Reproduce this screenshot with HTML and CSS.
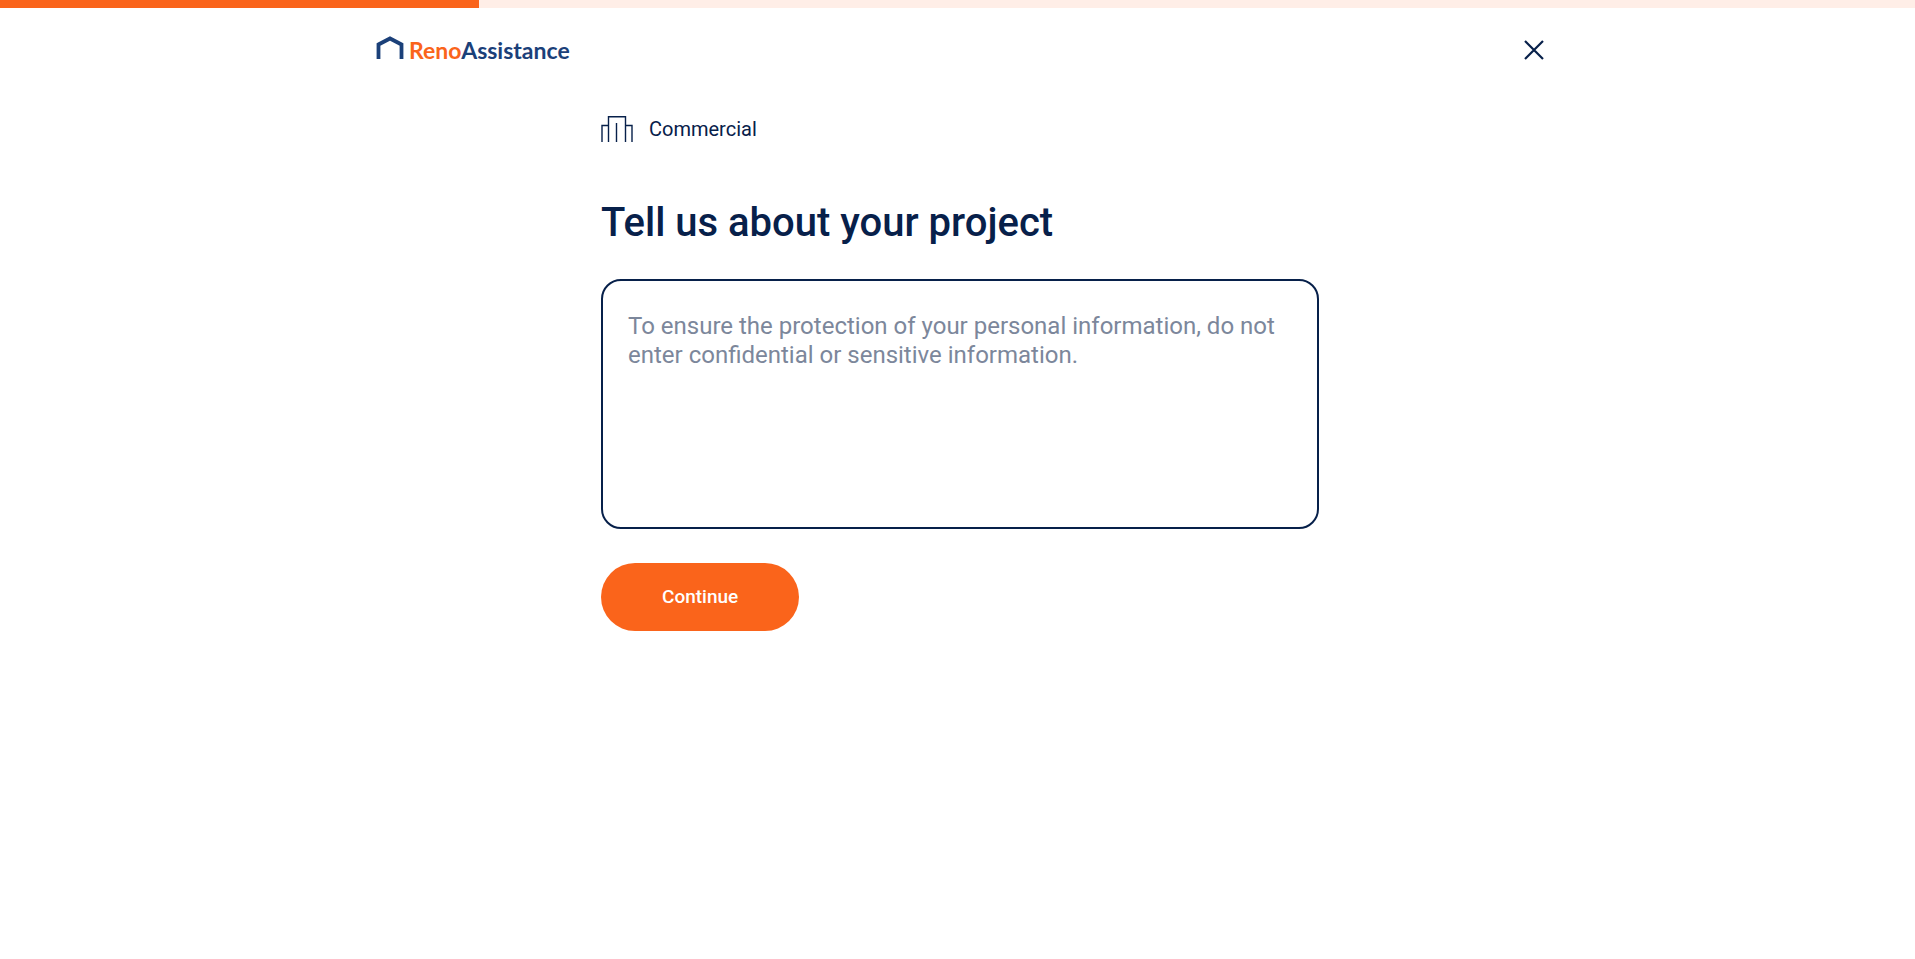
FILE: index.html
```html
<!DOCTYPE html>
<html lang="en">
<head>
    <meta charset="UTF-8">
    <meta name="viewport" content="width=device-width, initial-scale=1.0">
    <title>RenoAssistance - Tell us about your project</title>
    <link rel="stylesheet" href="styles.css">
</head>
<body>
    <div class="progress" role="progressbar" aria-label="Form progress" aria-valuenow="25" aria-valuemin="0" aria-valuemax="100">
        <div class="progress-bar" style="width: 25%"></div>
    </div>
    <div class="page">
        <header class="header">
            <a class="logo" href="#" aria-label="RenoAssistance">
                <svg class="logo-mark" width="29" height="24" viewBox="0 0 29 24" aria-hidden="true">
                    <path d="M2.500 23V8.500L14 2.500L25.500 8.500V23" fill="none" stroke="#1b4079" stroke-width="3.800"/>
                </svg>
                <span class="logo-text"><span class="logo-reno">Reno</span>Assistance</span>
            </a>
            <button class="close" type="button" aria-label="Close">
                <svg width="20" height="20" viewBox="0 0 20 20" aria-hidden="true">
                    <path d="M1 1L19 19M19 1L1 19" fill="none" stroke="#07204a" stroke-width="2.200"/>
                </svg>
            </button>
        </header>
        <main class="content">
            <div class="category">
                <svg width="32" height="26" viewBox="0 0 32 26" aria-hidden="true">
                    <path d="M1 26V9.500H7.500M7.500 26V.7H24.500V26M24.500 9.500H31V26M15.500 7V26" fill="none" stroke="#07204a" stroke-width="1.400"/>
                </svg>
                <span>Commercial</span>
            </div>
            <form class="project-form">
                <h1><label for="project">Tell us about your project</label></h1>
                <textarea id="project" name="project" placeholder="To ensure the protection of your personal information, do not enter confidential or sensitive information."></textarea>
                <button class="continue" type="button">Continue</button>
            </form>
        </main>
    </div>
</body>
</html>
```

FILE: styles.css
```css
* {
    box-sizing: border-box;
}
body {
    margin: 0;
    background-color: #fff;
    color: #07204a;
    font-family: Roboto, Arial, sans-serif;
}
.progress {
    height: 8px;
    background-color: #ffeee7;
}
.progress-bar {
    height: 100%;
    background-color: #fa641b;
}
.page {
    padding-left: 5px;
}
.header {
    display: flex;
    justify-content: space-between;
    align-items: center;
    max-width: 1168px;
    height: 84px;
    margin: 0 auto;
}
.logo {
    display: flex;
    align-items: center;
    gap: 4px;
    color: #1b4079;
    text-decoration: none;
}
.logo-mark {
    margin-bottom: 4px;
}
.logo-text {
    font-family: Lato, sans-serif;
    font-size: 23px;
    font-weight: 700;
    line-height: 28px;
}
.logo-reno {
    color: #fa641b;
}
.close {
    display: flex;
    padding: 0;
    border: none;
    background: none;
    cursor: pointer;
}
.content {
    max-width: 718px;
    margin: 0 auto;
    padding-top: 24px;
}
.category {
    display: flex;
    align-items: center;
    gap: 16px;
    font-size: 20px;
    line-height: 26px;
}
h1 {
    margin: 57px 0 32px;
    font-size: 40px;
    font-weight: 500;
    line-height: 48px;
}
textarea {
    display: block;
    width: 100%;
    height: 250px;
    padding: 31px 25px;
    border: 2px solid #07204a;
    border-radius: 20px;
    color: #07204a;
    font-family: inherit;
    font-size: 24px;
    line-height: 29px;
    resize: none;
}
textarea::placeholder {
    color: #7c879b;
}
.continue {
    display: block;
    margin-top: 34px;
    padding: 22px 61px;
    border: none;
    border-radius: 34px;
    background-color: #fa641b;
    color: #fff;
    font-family: inherit;
    font-size: 19px;
    font-weight: 500;
    line-height: 24px;
    cursor: pointer;
}
```
